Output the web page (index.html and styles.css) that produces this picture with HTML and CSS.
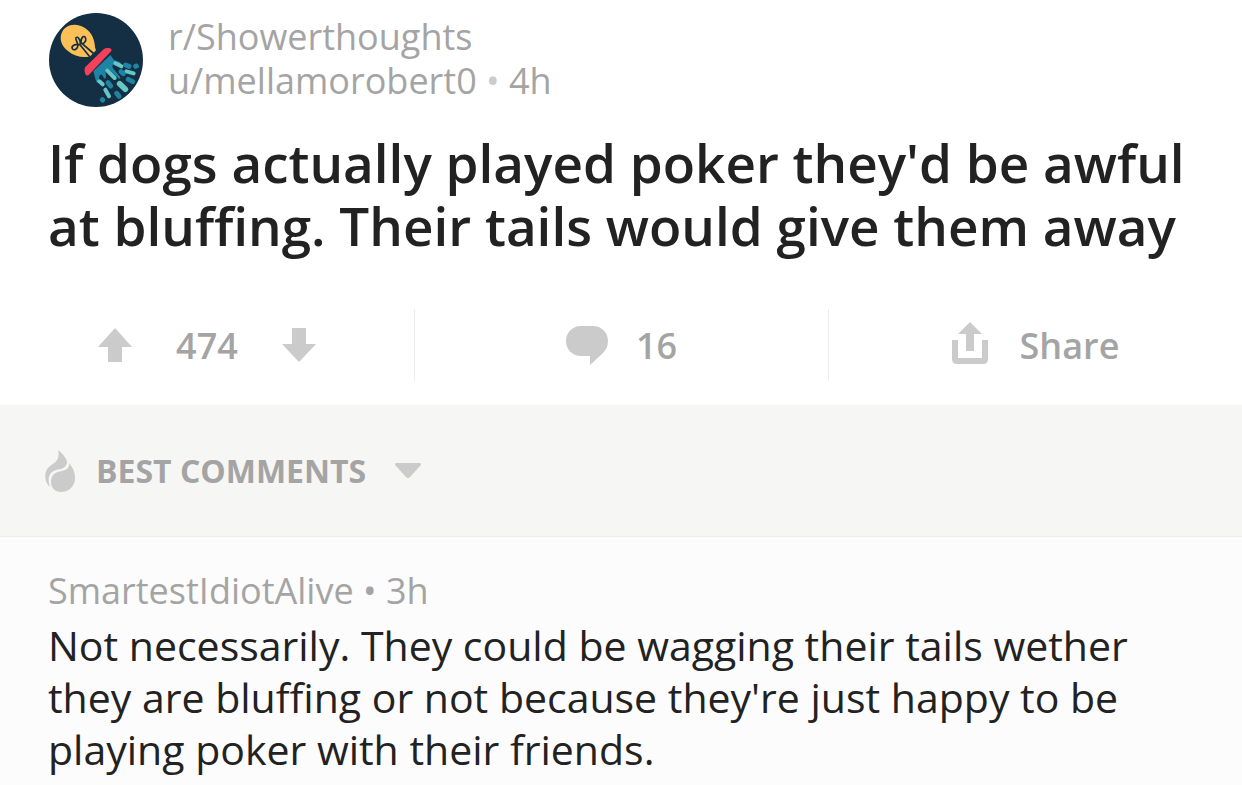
FILE: index.html
```html
<!DOCTYPE html>
<html lang="en">
<head>
<meta charset="utf-8">
<meta name="viewport" content="width=device-width, initial-scale=1">
<title>r/Showerthoughts</title>
<link rel="stylesheet" href="styles.css">
</head>
<body>
<main>
  <article class="post">
    <header class="post-header">
      <svg class="avatar" viewBox="26 27 282 282" aria-hidden="true">
        <circle cx="167" cy="168" r="141" fill="#142f43"/>
        <path d="M136 159C118 160 98 154 83 141C65 127 57 108 63 89C71 66 96 57 119 65C142 72 158 91 162 115C164 124 163 131 167 139L148 158Z" fill="#fdc056"/>
        <g fill="none" stroke="#142f43" stroke-width="5" stroke-linecap="round" stroke-linejoin="round">
          <path d="M147 157L119 122C104 118 92 127 96 134C101 142 113 134 113 123C111 113 104 106 107 101C112 96 120 107 120 118C128 122 139 113 136 103C132 91 121 100 122 116L158 147"/>
        </g>
        <path d="M190 136Q196 131 203 132Q216 132 213 141L146 212Q137 219 134 207Q131 196 134 190Z" fill="#f5405c"/>
        <path d="M210 153L159 202L167 231Q172 242 176 229L177 216Q181 207 187 215L191 223Q197 226 197 218L196 203Q199 193 207 197L221 210L236 224Q242 225 239 218L218 193Q213 184 222 180L238 181Q245 180 239 175L221 168Z" fill="#1e84a4"/>
        <g fill="none" stroke-linecap="round">
          <g stroke="#65c8c8" stroke-width="12">
            <path d="M225 178L243 187M201 200L223 222M177 232L187 241M258 202L280 208M195 257L206 277"/>
            <path d="M238 239L255 256" stroke-width="17"/>
          </g>
          <g stroke="#1e84a4" stroke-width="15">
            <path d="M256 183L266 187M286 187L288 186M242 203L249 209M203 236L211 246M264 226L277 233M229 268L236 277M186 287L187 288"/>
          </g>
        </g>
      </svg>
      <div class="post-meta">
        <a href="#subreddit">r/Showerthoughts</a>
        <div><a href="#author">u/mellamorobert0</a> <span class="dot">•</span> <span>4h</span></div>
      </div>
    </header>
    <h1 class="post-title">If dogs actually played poker they'd be awful at bluffing. Their tails would give them away</h1>
    <div class="actions">
      <div class="action votes">
        <button type="button" aria-label="Upvote"><svg width="34" height="34" viewBox="0 0 34 34"><path d="M17 0L34 19H24V34H10V19H0Z"/></svg></button>
        <span class="score">474</span>
        <button type="button" aria-label="Downvote"><svg width="34" height="34" viewBox="0 0 34 34"><path d="M17 34L34 16H24V0H10V16H0Z"/></svg></button>
      </div>
      <button type="button" class="action comments" aria-label="16 comments">
        <svg width="42" height="40" viewBox="0 0 42 40"><path d="M15 1H27C36 1 42 8 42 16C42 21 40 25 37 28L24 40V31H15C6 31 0 24 0 16C0 8 6 1 15 1Z"/></svg>
        <span>16</span>
      </button>
      <button type="button" class="action share">
        <svg width="36" height="46" viewBox="0 0 36 46"><path d="M18 0L30 12H22V29H14V12H6ZM0 18H6V36H30V18H36V37Q36 42 31 42H5Q0 42 0 37Z"/></svg>
        <span>Share</span>
      </button>
    </div>
  </article>
  <div class="sort-bar">
    <button type="button" class="sort">
      <svg width="30" height="42" viewBox="0 0 30 42"><path d="M13 0C19 5 22 9 22 13C21 18 16 19 11 20C4 22 2 29 5 37C-1 32-1 22 3 18C7 13 16 12 13 0ZM24 13C29 19 30 23 30 28C30 36 24 42 16 42C10 42 6 38 6 32C6 24 11 22 17 21C22 20 25 17 24 13Z"/></svg>
      <span>BEST COMMENTS</span>
      <svg class="caret" width="26" height="16" viewBox="0 0 26 16"><path d="M1 0H25Q27 1 25 3L15 14Q13 16 11 14L1 3Q-1 1 1 0Z"/></svg>
    </button>
  </div>
  <section class="comment">
    <div class="comment-meta"><a href="#commenter">SmartestIdiotAlive</a> <span>•</span> <span>3h</span></div>
    <p>Not necessarily. They could be wagging their tails wether they are bluffing or not because they're just happy to be playing poker with their friends.</p>
  </section>
</main>
</body>
</html>
```
FILE: styles.css
```css
* { box-sizing: border-box; }

body {
  margin: 0;
  background: #fcfcfc;
  color: #222;
  font-family: "Open Sans", "Noto Sans", sans-serif;
}

a { color: inherit; text-decoration: none; }

button {
  margin: 0;
  padding: 0;
  border: 0;
  background: none;
  color: inherit;
  font: inherit;
  cursor: pointer;
}

svg { display: block; flex: none; fill: #cbcbcb; }

.post { padding-top: 13px; padding-bottom: 24px; background: #fff; }

.post-header { display: flex; gap: 25px; padding: 0 49px; }

.avatar { width: 94px; height: 94px; }

.post-meta { padding-top: 2px; color: #a4a4a4; font-size: 36px; line-height: 44px; }

.dot { color: #cbcbcb; }

.post-title {
  margin: 24px 0 52px;
  padding: 0 48px;
  font-size: 53px;
  font-weight: 600;
  line-height: 63px;
}

.actions {
  display: grid;
  grid-template-columns: repeat(3, 1fr);
  height: 72px;
  color: #a4a4a4;
  font-size: 36px;
  font-weight: 600;
}

.action { display: flex; align-items: center; justify-content: center; }
.action + .action { border-left: 1px solid #ededed; }
.votes { gap: 44px; }
.comments { gap: 28px; }
.share { gap: 32px; }

.sort-bar {
  display: flex;
  align-items: center;
  height: 132px;
  padding: 0 45px;
  border-bottom: 1px solid #ececec;
  background: #f6f6f5;
}

.sort {
  display: flex;
  align-items: center;
  gap: 21px;
  color: #a5a4a5;
  font-size: 32px;
  font-weight: 700;
}

.caret { margin-left: 8px; }

.comment { padding: 32px 48px 8px; }
.comment-meta { color: #a4a4a4; font-size: 36px; line-height: 44px; }
.comment p { margin: 6px 0 0; font-size: 41px; line-height: 52px; }
```
